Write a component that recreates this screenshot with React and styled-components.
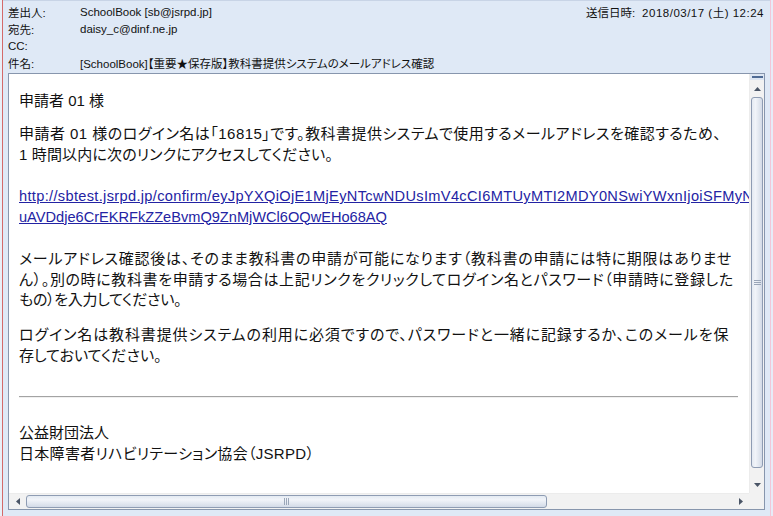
import React from "react";
import styled, { createGlobalStyle } from "styled-components";

const GlobalStyle = createGlobalStyle`
  html, body { margin: 0; padding: 0; }
  body {
    background: #dfe9f6;
    font-family: "Liberation Sans", "Noto Sans CJK JP", sans-serif;
    color: #000;
  }
`;

const Window = styled.div`
  width: 773px;
  height: 516px;
  box-sizing: border-box;
  background: #dfe9f6;
  display: flex;
  flex-direction: column;
  box-shadow: inset 2px 0 0 #e9eff7, inset 3px 0 0 #d46a6a,
    inset -2px 0 0 #e6ecf8, inset -3px 0 0 #f2c6d8, inset 0 1px 0 #c8d4e6;
  overflow: hidden;
`;

const Header = styled.div`
  display: flex;
  flex-direction: column;
  padding: 3px 9px 0 8px;
  font-size: 11.5px;
  font-feature-settings: "palt";
  font-family: "Liberation Sans", "Noto Sans CJK JP", sans-serif;
  color: #111;
`;

const HeaderRow = styled.div`
  display: flex;
  align-items: center;
  height: 17px;
  white-space: nowrap;
`;

const Label = styled.span`
  width: ${(p) => p.$w || 72}px;
  flex: none;
`;

const Value = styled.span`
  letter-spacing: ${(p) => p.$ls || 0}px;
`;

const DateBox = styled.span`
  margin-left: auto;
  display: flex;
  align-items: center;
`;

const MailFrame = styled.div`
  margin: 2px 8px 6px 8px;
  height: 437px;
  box-sizing: border-box;
  border: 1px solid #8796ad;
  background: #fff;
  display: grid;
  grid-template-columns: 1fr 15px;
  grid-template-rows: 1fr 16px;
`;

const Content = styled.div`
  overflow: hidden;
  padding: 17px 11px 0 10px;
  font-family: "Liberation Sans", "Noto Sans CJK JP", sans-serif;
  font-size: 15px;
  line-height: 20.5px;
  font-feature-settings: "palt";
  color: #111;
`;

const Para = styled.div`
  margin-top: ${(p) => p.$gap || 0}px;
  white-space: nowrap;
`;

const Line = styled.div`
  white-space: nowrap;
  letter-spacing: ${(p) => p.$ls || 0}px;
`;

const Link = styled.a`
  color: #2323a3;
  text-decoration: underline;
  font-size: 14.6px;
`;

const Rule = styled.hr`
  margin: 30px 0 0 0;
  border: none;
  border-top: 1px solid #a3a3a3;
  border-bottom: 1px solid #f0f0f0;
  height: 0;
`;

/* Scrollbars */
const VScroll = styled.div`
  display: flex;
  flex-direction: column;
  background: #f2f2f2;
  border-left: 1px solid #ececec;
`;

const Splitter = styled.div`
  height: 6px;
  flex: none;
  display: flex;
  align-items: center;
  justify-content: center;
  background: #dde6f2;
  &::after {
    content: "";
    width: 11px;
    height: 2px;
    background: #4f6b95;
  }
`;

const ArrowBtn = styled.div`
  flex: none;
  width: ${(p) => (p.$h ? "17px" : "100%")};
  height: ${(p) => (p.$h ? "100%" : "17px")};
  display: flex;
  align-items: center;
  justify-content: center;
`;

const VThumb = styled.div`
  flex: none;
  height: 371px;
  margin: 0 1px;
  box-sizing: border-box;
  border: 1px solid #8e9cb3;
  border-radius: 3px;
  background: linear-gradient(to right, #e4eaf2 0%, #f1f4f9 35%, #d3dbe7 100%);
  display: flex;
  align-items: center;
  justify-content: center;
`;

const Track = styled.div`
  flex: 1;
`;

const HScroll = styled.div`
  display: flex;
  background: #f2f2f2;
  border-top: 1px solid #ececec;
`;

const HThumb = styled.div`
  flex: none;
  width: 521px;
  margin: 1px 0;
  box-sizing: border-box;
  border: 1px solid #8e9cb3;
  border-radius: 3px;
  background: linear-gradient(to bottom, #e4eaf2 0%, #f1f4f9 35%, #d3dbe7 100%);
  display: flex;
  align-items: center;
  justify-content: center;
`;

const Corner = styled.div`
  background: #f2f2f2;
`;

const Tri = ({ dir }) => {
  const pts = {
    up: "0,4 3.5,0 7,4",
    down: "0,0 7,0 3.5,4",
    left: "4,0 4,7 0,3.5",
    right: "0,0 0,7 4,3.5",
  }[dir];
  const vertical = dir === "up" || dir === "down";
  return (
    <svg width={vertical ? 7 : 4} height={vertical ? 4 : 7} viewBox={vertical ? "0 0 7 4" : "0 0 4 7"}>
      <polygon points={pts} fill="#4a5566" />
    </svg>
  );
};

const GripV = () => (
  <svg width="7" height="6" viewBox="0 0 7 6">
    <rect x="0" y="0" width="7" height="1" fill="#9aa6b8" />
    <rect x="0" y="2" width="7" height="1" fill="#9aa6b8" />
    <rect x="0" y="4" width="7" height="1" fill="#9aa6b8" />
  </svg>
);

const GripH = () => (
  <svg width="6" height="7" viewBox="0 0 6 7">
    <rect x="0" y="0" width="1" height="7" fill="#9aa6b8" />
    <rect x="2" y="0" width="1" height="7" fill="#9aa6b8" />
    <rect x="4" y="0" width="1" height="7" fill="#9aa6b8" />
  </svg>
);

export default function App() {
  return (
    <>
      <GlobalStyle />
      <Window>
        <Header>
          <HeaderRow>
            <Label>差出人:</Label>
            <Value>SchoolBook [sb@jsrpd.jp]</Value>
            <DateBox>
              <Label $w={56}>送信日時:</Label>
              <Value $ls={0.5}>2018/03/17 (土) 12:24</Value>
            </DateBox>
          </HeaderRow>
          <HeaderRow>
            <Label>宛先:</Label>
            <Value>daisy_c@dinf.ne.jp</Value>
          </HeaderRow>
          <HeaderRow>
            <Label>CC:</Label>
          </HeaderRow>
          <HeaderRow>
            <Label>件名:</Label>
            <Value>[SchoolBook]【重要★保存版】教科書提供システムのメールアドレス確認</Value>
          </HeaderRow>
        </Header>
        <MailFrame>
          <Content>
            <Para>申請者 01 様</Para>
            <Para $gap={12.5}>
              <Line $ls={0.47}>申請者 01 様のログイン名は「16815」です。教科書提供システムで使用するメールアドレスを確認するため、</Line>
              <Line $ls={0.15}>1 時間以内に次のリンクにアクセスしてください。</Line>
            </Para>
            <Para $gap={21}>
              <Line $ls={0.33}>
                <Link href="#">http://sbtest.jsrpd.jp/confirm/eyJpYXQiOjE1MjEyNTcwNDUsImV4cCI6MTUyMTI2MDY0NSwiYWxnIjoiSFMyNTYifQ</Link>
              </Line>
              <Line>
                <Link href="#">uAVDdje6CrEKRFkZZeBvmQ9ZnMjWCl6OQwEHo68AQ</Link>
              </Line>
            </Para>
            <Para $gap={22}>
              <Line $ls={0.76}>メールアドレス確認後は、そのまま教科書の申請が可能になります（教科書の申請には特に期限はありませ</Line>
              <Line $ls={0.63}>ん）。別の時に教科書を申請する場合は上記リンクをクリックしてログイン名とパスワード（申請時に登録した</Line>
              <Line $ls={-0.3}>もの）を入力してください。</Line>
            </Para>
            <Para $gap={14.5}>
              <Line $ls={0.88}>ログイン名は教科書提供システムの利用に必須ですので、パスワードと一緒に記録するか、このメールを保</Line>
              <Line>存しておいてください。</Line>
            </Para>
            <Rule />
            <Para $gap={25}>
              <Line>公益財団法人</Line>
              <Line $ls={0.3}>日本障害者リハビリテーション協会（JSRPD）</Line>
            </Para>
          </Content>
          <VScroll>
            <Splitter />
            <ArrowBtn>
              <Tri dir="up" />
            </ArrowBtn>
            <VThumb>
              <GripV />
            </VThumb>
            <Track />
            <ArrowBtn>
              <Tri dir="down" />
            </ArrowBtn>
          </VScroll>
          <HScroll>
            <ArrowBtn $h>
              <Tri dir="left" />
            </ArrowBtn>
            <HThumb>
              <GripH />
            </HThumb>
            <Track />
            <ArrowBtn $h>
              <Tri dir="right" />
            </ArrowBtn>
          </HScroll>
          <Corner />
        </MailFrame>
      </Window>
    </>
  );
}
